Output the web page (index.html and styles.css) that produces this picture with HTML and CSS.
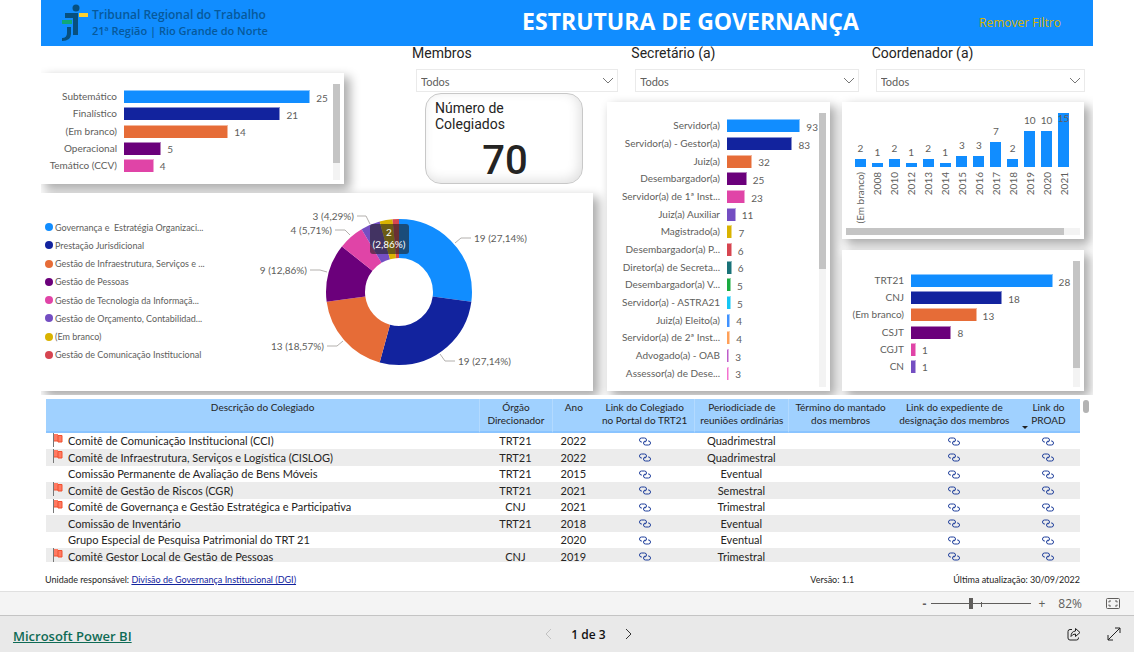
FILE: index.html
```html
<!DOCTYPE html>
<html lang="pt-BR">
<head>
<meta charset="utf-8">
<meta name="viewport" content="width=device-width, initial-scale=1">
<title>Estrutura de Governança</title>
<link rel="stylesheet" href="styles.css">
</head>
<body>
<svg class="defs" aria-hidden="true">
  <symbol id="link" viewBox="0 0 12 9"><path d="M3 5H2.500A2 2 0 0 1 2.500 1H5.500A2 2 0 0 1 5.500 5M9 4h.5a2 2 0 0 1 0 4H6.500A2 2 0 0 1 6.500 4" fill="none" stroke="#1f3f9b"/></symbol>
  <symbol id="flag" viewBox="0 0 11 14"><path d="M1.500 0v14" stroke="#777" fill="none"/><path d="M2 1h4v7H2z" fill="#ff7a62"/><path d="M6 2.500h4V9H6z" fill="#ff7a62" stroke="#f0502f"/><path d="M2 8h4" stroke="#f0502f"/></symbol>
  <symbol id="chevron" viewBox="0 0 12 8"><path d="M1 1l5 5 5-5" fill="none" stroke="#777"/></symbol>
</svg>
<main class="report">
  <header class="banner">
    <div class="brand">
      <svg class="brand-mark" width="28" height="38" viewBox="0 0 28 38" aria-hidden="true">
        <circle cx="15" cy="4" r="3.500" fill="#07507f"/>
        <path d="M4 9h13v22h-5V14H4z" fill="#07507f"/><path d="M18 9h9v4h-9z" fill="#ffd02e"/>
        <path d="M1 16h10v4H1z" fill="#10a878"/>
        <path d="M6 23h4v7q0 7-9 7v-3q5 0 5-5z" fill="#07507f"/>
      </svg>
      <p class="brand-text"><span class="brand-name">Tribunal Regional do Trabalho</span><br>21ª Região | Rio Grande do Norte</p>
    </div>
    <h1 class="title">ESTRUTURA DE GOVERNANÇA</h1>
    <button class="clear" type="button">Remover Filtro</button>
  </header>

  <div class="board">
    <form class="filters">
      <div class="filter"><label for="membros">Membros</label>
        <div class="picker"><select id="membros"><option>Todos</option></select><svg class="picker-icon" width="12" height="8"><use href="#chevron"/></svg></div></div>
      <div class="filter"><label for="secretario">Secretário (a)</label>
        <div class="picker"><select id="secretario"><option>Todos</option></select><svg class="picker-icon" width="12" height="8"><use href="#chevron"/></svg></div></div>
      <div class="filter"><label for="coordenador">Coordenador (a)</label>
        <div class="picker"><select id="coordenador"><option>Todos</option></select><svg class="picker-icon" width="12" height="8"><use href="#chevron"/></svg></div></div>
    </form>

    <section class="card card-type">
      <div class="bars">
        <div class="bar-row"><span class="bar-label">Subtemático</span><span class="track"><i class="bar c1" style="width:90%"></i><b>25</b></span></div>
        <div class="bar-row"><span class="bar-label">Finalístico</span><span class="track"><i class="bar c2" style="width:75.6%"></i><b>21</b></span></div>
        <div class="bar-row"><span class="bar-label">(Em branco)</span><span class="track"><i class="bar c3" style="width:50.4%"></i><b>14</b></span></div>
        <div class="bar-row"><span class="bar-label">Operacional</span><span class="track"><i class="bar c4" style="width:18%"></i><b>5</b></span></div>
        <div class="bar-row"><span class="bar-label">Temático (CCV)</span><span class="track"><i class="bar c5" style="width:14.4%"></i><b>4</b></span></div>
      </div>
      <div class="scroll"><i class="thumb" style="height:82%"></i></div>
    </section>

    <section class="kpi"><h2>Número de Colegiados</h2><p>70</p></section>

    <section class="card card-area">
      <ul class="legend">
        <li><i class="dot c1"></i>Governança e&nbsp; Estratégia Organizaci...</li>
        <li><i class="dot c2"></i>Prestação Jurisdicional</li>
        <li><i class="dot c3"></i>Gestão de Infraestrutura, Serviços e ...</li>
        <li><i class="dot c4"></i>Gestão de Pessoas</li>
        <li><i class="dot c5"></i>Gestão de Tecnologia da Informaçã...</li>
        <li><i class="dot c6"></i>Gestão de Orçamento, Contabilidad...</li>
        <li><i class="dot c7"></i>(Em branco)</li>
        <li><i class="dot c8"></i>Gestão de Comunicação Institucional</li>
      </ul>
      <svg class="donut" width="280" height="170" viewBox="0 0 280 170">
        <g class="ring" transform="rotate(-90 144 87)">
          <circle cx="144" cy="87" r="53.500" pathLength="70" stroke="#118dff" stroke-dasharray="19 51"/>
          <circle cx="144" cy="87" r="53.500" pathLength="70" stroke="#12239e" stroke-dasharray="19 51" stroke-dashoffset="-19"/>
          <circle cx="144" cy="87" r="53.500" pathLength="70" stroke="#e66c37" stroke-dasharray="13 57" stroke-dashoffset="-38"/>
          <circle cx="144" cy="87" r="53.500" pathLength="70" stroke="#6b007b" stroke-dasharray="9 61" stroke-dashoffset="-51"/>
          <circle cx="144" cy="87" r="53.500" pathLength="70" stroke="#e044a7" stroke-dasharray="4 66" stroke-dashoffset="-60"/>
          <circle cx="144" cy="87" r="53.500" pathLength="70" stroke="#744ec2" stroke-dasharray="3 67" stroke-dashoffset="-64"/>
          <circle cx="144" cy="87" r="53.500" pathLength="70" stroke="#d9b300" stroke-dasharray="2 68" stroke-dashoffset="-67"/>
          <circle cx="144" cy="87" r="53.500" pathLength="70" stroke="#d64550" stroke-dasharray="1 69" stroke-dashoffset="-69"/>
        </g>
        <path class="leader" d="M102 11h9l4 8M80 25h10l5 5M55 65h10l7 2M72 141h10l6-5M200 38l6-5h10M185 149l5 7h10"/>
        <g class="donut-text">
          <text x="99" y="15" text-anchor="end">3 (4,29%)</text>
          <text x="77" y="29" text-anchor="end">4 (5,71%)</text>
          <text x="52" y="69" text-anchor="end">9 (12,86%)</text>
          <text x="69" y="145" text-anchor="end">13 (18,57%)</text>
          <text x="219" y="37">19 (27,14%)</text>
          <text x="203" y="160">19 (27,14%)</text>
        </g>
        <rect x="115" y="19" width="39" height="30" rx="3" fill="#222" fill-opacity=".6"/>
        <g class="donut-tip"><text x="134" y="31" text-anchor="middle">2</text><text x="134" y="43" text-anchor="middle">(2,86%)</text></g>
      </svg>
    </section>

    <section class="card card-role">
      <div class="bars">
        <div class="bar-row"><span class="bar-label">Servidor(a)</span><span class="track"><i class="bar c1" style="width:81.5%"></i><b>93</b></span></div>
        <div class="bar-row"><span class="bar-label">Servidor(a) - Gestor(a)</span><span class="track"><i class="bar c2" style="width:72.7%"></i><b>83</b></span></div>
        <div class="bar-row"><span class="bar-label">Juiz(a)</span><span class="track"><i class="bar c3" style="width:28%"></i><b>32</b></span></div>
        <div class="bar-row"><span class="bar-label">Desembargador(a)</span><span class="track"><i class="bar c4" style="width:21.9%"></i><b>25</b></span></div>
        <div class="bar-row"><span class="bar-label">Servidor(a) de 1ª Inst...</span><span class="track"><i class="bar c5" style="width:20.2%"></i><b>23</b></span></div>
        <div class="bar-row"><span class="bar-label">Juiz(a) Auxiliar</span><span class="track"><i class="bar c6" style="width:9.6%"></i><b>11</b></span></div>
        <div class="bar-row"><span class="bar-label">Magistrado(a)</span><span class="track"><i class="bar c7" style="width:6.1%"></i><b>7</b></span></div>
        <div class="bar-row"><span class="bar-label">Desembargador(a) P...</span><span class="track"><i class="bar c8" style="width:5.3%"></i><b>6</b></span></div>
        <div class="bar-row"><span class="bar-label">Diretor(a) de Secreta...</span><span class="track"><i class="bar c9" style="width:5.3%"></i><b>6</b></span></div>
        <div class="bar-row"><span class="bar-label">Desembargador(a) V...</span><span class="track"><i class="bar c10" style="width:4.4%"></i><b>5</b></span></div>
        <div class="bar-row"><span class="bar-label">Servidor(a) - ASTRA21</span><span class="track"><i class="bar c11" style="width:4.4%"></i><b>5</b></span></div>
        <div class="bar-row"><span class="bar-label">Juiz(a) Eleito(a)</span><span class="track"><i class="bar c12" style="width:3.5%"></i><b>4</b></span></div>
        <div class="bar-row"><span class="bar-label">Servidor(a) de 2ª Inst...</span><span class="track"><i class="bar c13" style="width:3.5%"></i><b>4</b></span></div>
        <div class="bar-row"><span class="bar-label">Advogado(a) - OAB</span><span class="track"><i class="bar c14" style="width:2.6%"></i><b>3</b></span></div>
        <div class="bar-row"><span class="bar-label">Assessor(a) de Dese...</span><span class="track"><i class="bar c15" style="width:2.6%"></i><b>3</b></span></div>
      </div>
      <div class="scroll"><i class="thumb" style="height:57%"></i></div>
    </section>

    <section class="card card-year">
      <div class="columns">
        <div class="col"><div class="plot"><i class="pillar" style="height:14%"></i><b>2</b></div><span>(Em branco)</span></div>
        <div class="col"><div class="plot"><i class="pillar" style="height:7%"></i><b>1</b></div><span>2008</span></div>
        <div class="col"><div class="plot"><i class="pillar" style="height:14%"></i><b>2</b></div><span>2010</span></div>
        <div class="col"><div class="plot"><i class="pillar" style="height:7%"></i><b>1</b></div><span>2012</span></div>
        <div class="col"><div class="plot"><i class="pillar" style="height:14%"></i><b>2</b></div><span>2013</span></div>
        <div class="col"><div class="plot"><i class="pillar" style="height:7%"></i><b>1</b></div><span>2014</span></div>
        <div class="col"><div class="plot"><i class="pillar" style="height:20%"></i><b>3</b></div><span>2015</span></div>
        <div class="col"><div class="plot"><i class="pillar" style="height:20%"></i><b>3</b></div><span>2016</span></div>
        <div class="col"><div class="plot"><i class="pillar" style="height:47%"></i><b>7</b></div><span>2017</span></div>
        <div class="col"><div class="plot"><i class="pillar" style="height:14%"></i><b>2</b></div><span>2018</span></div>
        <div class="col"><div class="plot"><i class="pillar" style="height:67%"></i><b>10</b></div><span>2019</span></div>
        <div class="col"><div class="plot"><i class="pillar" style="height:67%"></i><b>10</b></div><span>2020</span></div>
        <div class="col"><div class="plot"><i class="pillar" style="height:100%"></i><b class="inside">15</b></div><span>2021</span></div>
      </div>
      <div class="scroll-x"><i class="thumb" style="width:93%"></i></div>
    </section>

    <section class="card card-body">
      <div class="bars">
        <div class="bar-row"><span class="bar-label">TRT21</span><span class="track"><i class="bar c1" style="width:88.5%"></i><b>28</b></span></div>
        <div class="bar-row"><span class="bar-label">CNJ</span><span class="track"><i class="bar c2" style="width:57%"></i><b>18</b></span></div>
        <div class="bar-row"><span class="bar-label">(Em branco)</span><span class="track"><i class="bar c3" style="width:41%"></i><b>13</b></span></div>
        <div class="bar-row"><span class="bar-label">CSJT</span><span class="track"><i class="bar c4" style="width:25.3%"></i><b>8</b></span></div>
        <div class="bar-row"><span class="bar-label">CGJT</span><span class="track"><i class="bar c5" style="width:3.2%"></i><b>1</b></span></div>
        <div class="bar-row"><span class="bar-label">CN</span><span class="track"><i class="bar c6" style="width:3.2%"></i><b>1</b></span></div>
      </div>
      <div class="scroll"><i class="thumb" style="height:85%"></i></div>
    </section>
  </div>

  <div class="table-area">
    <div class="table-clip">
      <table>
        <colgroup><col class="w-desc"><col class="w-org"><col class="w-year"><col class="w-portal"><col class="w-period"><col class="w-end"><col class="w-exp"><col class="w-proad"></colgroup>
        <thead><tr><th>Descrição do Colegiado</th><th class="line">Órgão<br>Direcionador</th><th class="line">Ano</th><th>Link do Colegiado<br>no Portal do TRT21</th><th class="line">Periodiciade de<br>reuniões ordinárias</th><th class="line">Término do mantado<br>dos membros</th><th>Link do expediente de<br>designação dos membros</th><th class="sorted">Link do<br>PROAD</th></tr></thead>
        <tbody>
          <tr><td><svg class="flag" width="11" height="14"><use href="#flag"/></svg>Comitê de Comunicação Institucional (CCI)</td><td>TRT21</td><td>2022</td><td><a href="#portal" aria-label="Portal"><svg width="12" height="9"><use href="#link"/></svg></a></td><td>Quadrimestral</td><td></td><td><a href="#exp" aria-label="Expediente"><svg width="12" height="9"><use href="#link"/></svg></a></td><td><a href="#proad" aria-label="PROAD"><svg width="12" height="9"><use href="#link"/></svg></a></td></tr>
          <tr><td><svg class="flag" width="11" height="14"><use href="#flag"/></svg>Comitê de Infraestrutura, Serviços e Logística (CISLOG)</td><td>TRT21</td><td>2022</td><td><a href="#portal" aria-label="Portal"><svg width="12" height="9"><use href="#link"/></svg></a></td><td>Quadrimestral</td><td></td><td><a href="#exp" aria-label="Expediente"><svg width="12" height="9"><use href="#link"/></svg></a></td><td><a href="#proad" aria-label="PROAD"><svg width="12" height="9"><use href="#link"/></svg></a></td></tr>
          <tr><td>Comissão Permanente de Avaliação de Bens Móveis</td><td>TRT21</td><td>2015</td><td><a href="#portal" aria-label="Portal"><svg width="12" height="9"><use href="#link"/></svg></a></td><td>Eventual</td><td></td><td><a href="#exp" aria-label="Expediente"><svg width="12" height="9"><use href="#link"/></svg></a></td><td><a href="#proad" aria-label="PROAD"><svg width="12" height="9"><use href="#link"/></svg></a></td></tr>
          <tr><td><svg class="flag" width="11" height="14"><use href="#flag"/></svg>Comitê de Gestão de Riscos (CGR)</td><td>TRT21</td><td>2021</td><td><a href="#portal" aria-label="Portal"><svg width="12" height="9"><use href="#link"/></svg></a></td><td>Semestral</td><td></td><td><a href="#exp" aria-label="Expediente"><svg width="12" height="9"><use href="#link"/></svg></a></td><td><a href="#proad" aria-label="PROAD"><svg width="12" height="9"><use href="#link"/></svg></a></td></tr>
          <tr><td><svg class="flag" width="11" height="14"><use href="#flag"/></svg>Comitê de Governança e Gestão Estratégica e Participativa</td><td>CNJ</td><td>2021</td><td><a href="#portal" aria-label="Portal"><svg width="12" height="9"><use href="#link"/></svg></a></td><td>Trimestral</td><td></td><td><a href="#exp" aria-label="Expediente"><svg width="12" height="9"><use href="#link"/></svg></a></td><td><a href="#proad" aria-label="PROAD"><svg width="12" height="9"><use href="#link"/></svg></a></td></tr>
          <tr><td>Comissão de Inventário</td><td>TRT21</td><td>2018</td><td><a href="#portal" aria-label="Portal"><svg width="12" height="9"><use href="#link"/></svg></a></td><td>Eventual</td><td></td><td><a href="#exp" aria-label="Expediente"><svg width="12" height="9"><use href="#link"/></svg></a></td><td><a href="#proad" aria-label="PROAD"><svg width="12" height="9"><use href="#link"/></svg></a></td></tr>
          <tr><td>Grupo Especial de Pesquisa Patrimonial do TRT 21</td><td></td><td>2020</td><td><a href="#portal" aria-label="Portal"><svg width="12" height="9"><use href="#link"/></svg></a></td><td>Eventual</td><td></td><td><a href="#exp" aria-label="Expediente"><svg width="12" height="9"><use href="#link"/></svg></a></td><td><a href="#proad" aria-label="PROAD"><svg width="12" height="9"><use href="#link"/></svg></a></td></tr>
          <tr><td><svg class="flag" width="11" height="14"><use href="#flag"/></svg>Comitê Gestor Local de Gestão de Pessoas</td><td>CNJ</td><td>2019</td><td><a href="#portal" aria-label="Portal"><svg width="12" height="9"><use href="#link"/></svg></a></td><td>Trimestral</td><td></td><td><a href="#exp" aria-label="Expediente"><svg width="12" height="9"><use href="#link"/></svg></a></td><td><a href="#proad" aria-label="PROAD"><svg width="12" height="9"><use href="#link"/></svg></a></td></tr>
        </tbody>
      </table>
    </div>
    <i class="table-thumb"></i>
  </div>

  <div class="notes">
    <p class="owner">Unidade responsável: <a href="#dgi">Divisão de Governança Institucional (DGI)</a></p>
    <p class="version">Versão: 1.1</p>
    <p>Última atualização: 30/09/2022</p>
  </div>
</main>

<div class="zoombar">
  <button class="step" type="button" aria-label="Reduzir">-</button>
  <div class="slider"><input type="range" min="0" max="100" value="39" aria-label="Zoom"><i class="tick"></i></div>
  <button type="button" aria-label="Ampliar">+</button>
  <span class="zoom-value">82%</span>
  <button class="fit" type="button" aria-label="Ajustar à página"><svg width="14" height="11" viewBox="0 0 14 11" fill="none" stroke="#605e5c"><rect x=".5" y=".5" width="13" height="10" rx="1"/><path d="M5 3H3v1.500M9 3h2v1.500M5 8H3V6.500M9 8h2V6.500"/></svg></button>
</div>
<footer class="pager">
  <a class="product" href="#powerbi">Microsoft Power BI</a>
  <nav class="pages">
    <button type="button" aria-label="Anterior" disabled><svg width="8" height="12" viewBox="0 0 8 12"><path d="M7 1L2 6l5 5" fill="none" stroke="#c2c2c2"/></svg></button>
    <span>1 de 3</span>
    <button type="button" aria-label="Próxima"><svg width="8" height="12" viewBox="0 0 8 12"><path d="M1 1l5 5-5 5" fill="none" stroke="#333"/></svg></button>
  </nav>
  <div class="tools">
    <button type="button" aria-label="Compartilhar"><svg width="14" height="14" viewBox="0 0 14 14" fill="none" stroke="#222"><path d="M5 2.500H3a2 2 0 0 0-2 2V11a2 2 0 0 0 2 2h6.500a2 2 0 0 0 2-2v-.5"/><path d="M8.500 1.500L13 5.500l-4.500 4V7Q5.500 7 4 9.500 4 4.500 8.500 4z" stroke-linejoin="round"/></svg></button>
    <button type="button" aria-label="Tela cheia"><svg width="14" height="14" viewBox="0 0 14 14" fill="none" stroke="#222"><path d="M1 13L13 1M8 1h5v5M1 8v5h5"/></svg></button>
  </div>
</footer>
</body>
</html>
```

FILE: styles.css
```css
* { box-sizing: border-box; }
body {
  margin: 0;
  min-height: 100vh;
  display: flex;
  flex-direction: column;
  background: #fff;
  color: #252423;
  font-family: Lato, "Open Sans", sans-serif;
  font-size: 10px;
}
h1, h2, p, ul { margin: 0; padding: 0; }
button { border: 0; padding: 0; background: none; font: inherit; color: inherit; }
button, select { cursor: pointer; }
svg { display: block; }
.defs { position: absolute; width: 0; height: 0; }

.report { flex: 1; padding: 0 41px; }

/* banner */
.banner {
  min-height: 46px;
  display: grid;
  grid-template-columns: auto 1fr auto;
  align-items: center;
  padding: 0 32px 4px 20px;
  background: #118dff;
  font-family: "Open Sans", "Noto Sans", sans-serif;
}
.brand { display: flex; gap: 3px; padding-top: 4px; }
.brand-text { font-size: 11px; line-height: 16px; font-weight: 600; color: #07599b; white-space: nowrap; padding-top: 3px; }
.brand-name { font-size: 12px; }
.title { font-size: 23px; line-height: 30px; font-weight: 700; color: #fff; white-space: nowrap; text-align: center; padding-left: 134px; }
.clear { font-size: 12px; color: #d9b300; padding-top: 2px; }

/* dashboard grid */
.board {
  display: grid;
  grid-template-columns: 303fr 68fr 181fr 14fr 223fr 12fr 242fr 9fr;
  grid-template-rows: 27px 20px 9px 82px 9px 46px 11px 141px;
  padding-bottom: 4px;
  overflow: hidden;
}
.filters {
  grid-area: 1 / 3 / 3 / -1;
  display: grid;
  grid-template-columns: 206fr 227fr 213fr;
  gap: 13px;
  padding-right: 8px;
}
.filter label { display: block; font: 14px/14px Roboto, sans-serif; color: #252423; }
.picker { position: relative; margin: 9px 0 0 4px; }
.picker select {
  appearance: none;
  display: block;
  width: 100%;
  height: 23px;
  padding: 2px 4px 0;
  border: 1px solid #eaeaea;
  border-radius: 0;
  background: #fff;
  color: #605e5c;
  font: 11px Lato, sans-serif;
}
.picker-icon { position: absolute; right: 4px; top: 8px; pointer-events: none; }

.card { display: flex; background: #fff; box-shadow: 5px 5px 10px 1px rgba(0, 0, 0, .33); min-width: 0; color: #605e5c; }
.card-type { grid-area: 2 / 1 / 5 / 2; padding: 11px 4px 4px 0; }
.card-area { grid-area: 6 / 1 / 9 / 4; padding: 12px 0 16px 4px; }
.card-role { grid-area: 4 / 5 / 9 / 6; padding: 11px 4px 4px 0; }
.card-year { grid-area: 4 / 7 / 7 / 8; flex-direction: column; padding: 11px 4px 4px; }
.card-body { grid-area: 8 / 7 / 9 / 8; padding: 11px 4px 4px 0; }

.kpi {
  grid-area: 3 / 3 / 5 / 4;
  margin: 0 10px 0 13px;
  padding: 6px 9px 0;
  border: 1px solid #c8c8c8;
  border-radius: 16px;
  box-shadow: inset -3px -3px 12px rgba(0, 0, 0, .12);
  font-family: Roboto, sans-serif;
  color: #252423;
}
.kpi h2 { font-size: 14px; line-height: 16px; font-weight: 400; max-width: 100px; }
.kpi p { font-size: 40px; line-height: 46px; font-weight: 500; text-align: center; padding: 6px 0 0 2px; }

/* horizontal bars */
.bars { flex: 1; min-width: 0; display: flex; flex-direction: column; }
.card-type .bars { padding: 4px 2px 6px 0; }
.card-role .bars { padding: 4px 2px 5px 0; }
.card-body .bars { padding: 11px 2px 12px 0; }
.bar-row { flex: 1; display: flex; align-items: center; gap: 7px; line-height: 13px; }
.bar-label { flex: none; width: 76px; text-align: right; white-space: nowrap; }
.card-role .bar-label { width: 113px; }
.card-body .bar-label { width: 62px; }
.track { flex: 1; min-width: 0; display: flex; align-items: center; gap: 6px; }
.bar { flex: none; height: 13px; border: solid rgba(255, 255, 255, .5); border-width: 1px 1px 0 0; }
.track b { font-weight: 400; padding-top: 3px; }

.scroll { flex: none; width: 7px; background: #f3f3f3; }
.scroll-x { flex: none; height: 7px; background: #f3f3f3; }
.thumb { display: block; width: 100%; height: 100%; background: #c4c4c4; }

/* year columns */
.columns { flex: 1; display: grid; grid-template-columns: repeat(13, 1fr); padding: 0 8px 0 6px; }
.plot { position: relative; height: 54px; display: flex; flex-direction: column-reverse; align-items: center; }
.pillar { flex: none; width: 11px; background: #118dff; }
.plot b { flex: none; font-weight: 400; line-height: 14px; padding-bottom: 4px; }
.plot .inside { position: absolute; top: 0; padding: 0; line-height: 10px; }
.col { display: flex; flex-direction: column; align-items: center; min-width: 0; }
.col span { writing-mode: vertical-rl; transform: rotate(180deg); margin-top: 5px; line-height: 12px; white-space: nowrap; }

.legend { flex: none; width: 165px; list-style: none; font-size: 9px; padding: 13px 0 11px; display: flex; flex-direction: column; }
.legend li { flex: 1; display: flex; align-items: center; gap: 2px; white-space: nowrap; }
.dot { flex: none; width: 8px; height: 8px; border-radius: 50%; }
.donut { margin-left: 45px; }
.ring circle { fill: none; stroke-width: 39; }
.leader { fill: none; stroke: #b3b0ad; }
.donut-text { fill: #605e5c; }
.donut-tip { fill: #fff; }

.c1 { background-color: #118dff; } .c2 { background-color: #12239e; } .c3 { background-color: #e66c37; }
.c4 { background-color: #6b007b; } .c5 { background-color: #e044a7; } .c6 { background-color: #744ec2; }
.c7 { background-color: #d9b300; } .c8 { background-color: #d64550; } .c9 { background-color: #197278; }
.c10 { background-color: #1aab40; } .c11 { background-color: #15c6f4; } .c12 { background-color: #4092ff; }
.c13 { background-color: #ffa058; } .c14 { background-color: #be5dc9; } .c15 { background-color: #f472d0; }

/* table */
.table-area { display: flex; gap: 3px; padding: 4px 4px 0 5px; }
.table-clip { flex: 1; height: 163px; overflow: hidden; }
.table-thumb { width: 6px; height: 13px; margin-top: 1px; border-radius: 3px; background: #b3b3b3; }
table { width: 100%; table-layout: fixed; border-collapse: separate; border-spacing: 0; font-size: 11px; }
.w-desc { width: 41.9%; } .w-org { width: 7%; } .w-year { width: 4.2%; } .w-portal { width: 9.6%; }
.w-period { width: 9.1%; } .w-end { width: 10%; } .w-exp { width: 12.1%; } .w-proad { width: 6.1%; }
th { height: 34px; padding: 2px 0 0; vertical-align: top; background: #a0d1ff; border-bottom: 2px solid #8ac4ff; font-size: 10px; line-height: 13px; font-weight: 400; white-space: nowrap; }
th.line { border-left: 1px solid #b3daff; }
.sorted { position: relative; }
.sorted::before { content: ""; position: absolute; left: 5px; bottom: 2px; border: 3px solid transparent; border-top-color: #222; border-bottom: 0; }
td { height: 16px; padding: 0; line-height: 16px; text-align: center; white-space: nowrap; }
tbody tr:nth-child(even) td { height: 17px; background: #ececec; }
td:first-child { position: relative; padding-left: 22px; text-align: left; }
.flag { position: absolute; left: 6px; top: 0; }
td a svg { margin: 0 auto; }

.notes { display: flex; padding: 11px 13px 0 4px; font-size: 9px; line-height: 13px; }
.owner { flex: 1; }
.owner a { color: #12239e; }
.version { margin-right: 99px; }

/* bottom bars */
.zoombar, .pager { flex: none; font-family: "Open Sans", sans-serif; }
.zoombar { height: 24px; display: flex; align-items: center; justify-content: flex-end; padding-right: 14px; border-top: 1px solid #e0e0e0; background: #f4f4f4; color: #605e5c; font-size: 12px; }
.step { font-weight: 700; }
.slider { position: relative; width: 100px; margin: 0 7px 0 5px; height: 12px; }
.slider input { appearance: none; display: block; width: 100%; height: 12px; margin: 0; background: linear-gradient(#605e5c, #605e5c) center / 100% 1px no-repeat; }
.slider input::-webkit-slider-thumb { appearance: none; width: 4px; height: 11px; background: #605e5c; }
.tick { position: absolute; left: 50px; top: 4px; width: 1px; height: 5px; background: #605e5c; }
.zoom-value { margin: 0 24px 0 13px; }
.pager { height: 37px; display: grid; grid-template-columns: 1fr auto 1fr; align-items: center; padding: 0 13px; border-top: 1px solid #c4c4c4; background: #e9e9e9; }
.product { font-size: 13px; font-weight: 600; color: #0f6b55; justify-self: start; padding-top: 3px; }
.pages { display: flex; align-items: center; gap: 19px; padding-left: 43px; font-size: 12px; font-weight: 600; color: #111; }
.tools { justify-self: end; display: flex; gap: 26px; }
```
